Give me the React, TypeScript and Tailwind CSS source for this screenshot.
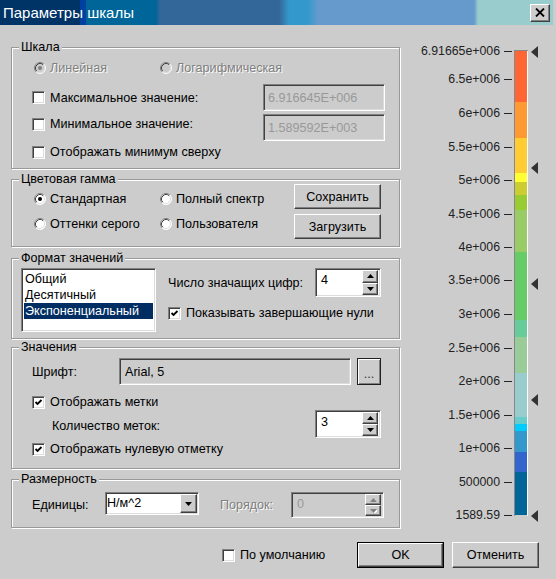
import React from "react";

const SUNKEN =
  "border border-t-[#808080] border-l-[#808080] border-b-white border-r-white shadow-[inset_1px_1px_0_#404040,inset_-1px_-1px_0_#dcdcdc]";
const RAISED =
  "border border-t-white border-l-white border-b-[#404040] border-r-[#404040] shadow-[inset_-1px_-1px_0_#808080] bg-[#cccccc]";
const DIS = "text-[#808080] [text-shadow:1px_1px_0_#ffffff]";

function Check({ checked }: { checked?: boolean }) {
  return (
    <span className={`flex items-center justify-center w-[13px] h-[13px] shrink-0 bg-white ${SUNKEN}`}>
      {checked && (
        <svg width="9" height="9" viewBox="0 0 9 9">
          <polyline points="1.5,4 3.5,6 7.5,2" fill="none" stroke="#000" strokeWidth="1.8" />
        </svg>
      )}
    </span>
  );
}

function Radio({ checked, disabled }: { checked?: boolean; disabled?: boolean }) {
  return (
    <svg width="12" height="12" viewBox="0 0 12 12" className="shrink-0">
      <circle cx="6" cy="6" r="5.5" fill={disabled ? "#cccccc" : "#ffffff"} />
      <path d="M2.11 9.89 A5.5 5.5 0 0 1 9.89 2.11" stroke="#808080" fill="none" />
      <path d="M9.89 2.11 A5.5 5.5 0 0 1 2.11 9.89" stroke="#ffffff" fill="none" />
      <path d="M2.82 9.18 A4.5 4.5 0 0 1 9.18 2.82" stroke="#404040" fill="none" />
      <path d="M9.18 2.82 A4.5 4.5 0 0 1 2.82 9.18" stroke="#dcdcdc" fill="none" />
      {checked && <circle cx="6" cy="6" r="2" fill={disabled ? "#808080" : "#000000"} />}
    </svg>
  );
}

function Group({ title, className, children }: { title: string; className: string; children: React.ReactNode }) {
  return (
    <fieldset className={`border border-[#999999] shadow-[inset_1px_1px_0_#ffffff,1px_1px_0_#ffffff] ${className}`}>
      <legend className="ml-[7px] px-[2px] leading-[14px] bg-[#cccccc]">{title}</legend>
      {children}
    </fieldset>
  );
}

function Btn({ label, className }: { label: string; className: string }) {
  return <div className={`flex items-center justify-center ${RAISED} ${className}`}>{label}</div>;
}

function Arrow({ up, disabled }: { up?: boolean; disabled?: boolean }) {
  return (
    <div className={`flex-1 flex items-center justify-center ${RAISED}`}>
      <svg width="7" height="4" viewBox="0 0 7 4">
        {disabled && <polygon points={up ? "1,5 8,5 4.5,1" : "1,1 8,1 4.5,5"} fill="#ffffff" />}
        <polygon points={up ? "0,4 7,4 3.5,0" : "0,0 7,0 3.5,4"} fill={disabled ? "#808080" : "#000000"} />
      </svg>
    </div>
  );
}

function Spin({ value, disabled, className }: { value: string; disabled?: boolean; className: string }) {
  return (
    <div className={`flex p-[1px] ${SUNKEN} ${disabled ? "bg-[#cccccc] text-[#999999]" : "bg-white"} ${className}`}>
      <span className="flex-1 pl-[4px] pt-[3px] leading-[14px]">{value}</span>
      <div className="flex flex-col w-[16px] mr-[1px]">
        <Arrow up disabled={disabled} />
        <Arrow disabled={disabled} />
      </div>
    </div>
  );
}

const TICKS: [string, number][] = [
  ["6.91665e+006", 51],
  ["6.5e+006", 79],
  ["6e+006", 113],
  ["5.5e+006", 147],
  ["5e+006", 180],
  ["4.5e+006", 214],
  ["4e+006", 247],
  ["3.5e+006", 280],
  ["3e+006", 314],
  ["2.5e+006", 348],
  ["2e+006", 381],
  ["1.5e+006", 415],
  ["1e+006", 448],
  ["500000", 482],
  ["1589.59", 515],
];

const BANDS: [string, number, number][] = [
  ["#ff6633", 51, 102],
  ["#ff9933", 102, 138],
  ["#ffcc33", 138, 173],
  ["#ffff33", 173, 182],
  ["#cccc33", 182, 195],
  ["#99cc33", 195, 210],
  ["#99cc66", 210, 252],
  ["#66cc66", 252, 320],
  ["#66cc99", 320, 337],
  ["#99cc99", 337, 373],
  ["#99cccc", 373, 417],
  ["#66cccc", 417, 424],
  ["#00ccff", 424, 431],
  ["#3399cc", 431, 452],
  ["#3366cc", 452, 472],
  ["#006699", 472, 515],
];

function Scale() {
  return (
    <svg width="155" height="517" viewBox="401 25 155 517" className="shrink-0">
      {BANDS.map(([c, a, b]) => (
        <rect key={c + a} x="515" y={a} width="12" height={b - a} fill={c} />
      ))}
      <line x1="514.5" y1="50" x2="514.5" y2="516" stroke="#888888" />
      <line x1="514" y1="50.5" x2="528" y2="50.5" stroke="#888888" />
      <line x1="527.5" y1="51" x2="527.5" y2="516" stroke="#ffffff" />
      {TICKS.map(([t, y]) => (
        <g key={t}>
          <line x1="504" y1={y + 0.5} x2="512" y2={y + 0.5} stroke="#222222" />
          <text
            x="500"
            y={y + 1}
            textAnchor="end"
            dominantBaseline="middle"
            fontFamily="'Liberation Sans', Arial, sans-serif"
            fontSize="12.3"
            fill="#222222"
          >
            {t}
          </text>
        </g>
      ))}
      {[52, 168, 284, 400, 516].map((y) => (
        <polygon key={y} points={`531,${y} 538,${y - 6} 538,${y + 6}`} fill="#333333" />
      ))}
    </svg>
  );
}

export default function App() {
  return (
    <div className="w-[556px] h-[579px] bg-[#cccccc] flex flex-col font-['Liberation_Sans',Arial,sans-serif] text-[12.6px] leading-[16px] text-black overflow-hidden">
      {/* Title bar */}
      <div className="w-[553px] h-[25px] shrink-0 flex items-center justify-between pl-[3px] pr-[3px] bg-[linear-gradient(90deg,#003366_0px,#003366_80px,#0040a0_80px,#0040a0_86px,#006699_86px,#006699_156px,#336699_160px,#336699_279px,#3399cc_289px,#3399cc_308px,#6699cc_318px,#6699cc_474px,#99cccc_478px)]">
        <span className="text-white text-[15px] leading-[18px]">Параметры шкалы</span>
        <div className={`w-[20px] h-[18px] flex items-center justify-center ${RAISED}`}>
          <svg width="10" height="9" viewBox="0 0 10 9">
            <path d="M1 0.5 L9 8.5 M9 0.5 L1 8.5" stroke="#000" strokeWidth="1.8" />
          </svg>
        </div>
      </div>

      {/* Body */}
      <div className="flex h-[517px] shrink-0">
        <div className="w-[401px] pl-[11px] pt-[15px] flex flex-col shrink-0">
          {/* Шкала */}
          <Group title="Шкала" className="h-[129px] w-[389px]">
            <div className="flex items-center ml-[22px] mt-[6px] h-[16px]">
              <div className="flex items-center gap-[4px] w-[126px]">
                <Radio checked disabled />
                <span className={DIS}>Линейная</span>
              </div>
              <div className="flex items-center gap-[4px]">
                <Radio disabled />
                <span className={DIS}>Логарифмическая</span>
              </div>
            </div>
            <div className="flex items-center justify-between ml-[20px] w-[353px] mt-[8px] h-[27px]">
              <div className="flex items-center gap-[5px]">
                <Check />
                <span>Максимальное значение:</span>
              </div>
              <div className={`w-[122px] h-[27px] flex items-center pl-[4px] text-[#999999] ${SUNKEN}`}>6.916645E+006</div>
            </div>
            <div className="flex items-start justify-between ml-[20px] w-[353px] mt-[3px] h-[27px]">
              <div className="flex items-center gap-[5px] mt-[2px]">
                <Check />
                <span>Минимальное значение:</span>
              </div>
              <div className={`w-[122px] h-[27px] flex items-center pl-[4px] text-[#999999] ${SUNKEN}`}>1.589592E+003</div>
            </div>
            <div className="flex items-center gap-[5px] ml-[20px] mt-[3px] h-[16px]">
              <Check />
              <span>Отображать минимум сверху</span>
            </div>
          </Group>

          {/* Цветовая гамма */}
          <Group title="Цветовая гамма" className="h-[75px] w-[389px] mt-[3px]">
            <div className="flex ml-[22px]">
              <div className="w-[260px] flex flex-col mt-[5px] gap-[9px]">
                <div className="flex items-center h-[16px]">
                  <div className="flex items-center gap-[4px] w-[126px]">
                    <Radio checked />
                    <span>Стандартная</span>
                  </div>
                  <div className="flex items-center gap-[4px]">
                    <Radio />
                    <span>Полный спектр</span>
                  </div>
                </div>
                <div className="flex items-center h-[16px]">
                  <div className="flex items-center gap-[4px] w-[126px]">
                    <Radio />
                    <span>Оттенки серого</span>
                  </div>
                  <div className="flex items-center gap-[4px]">
                    <Radio />
                    <span>Пользователя</span>
                  </div>
                </div>
              </div>
              <div className="flex flex-col gap-[5px] -mt-[2px]">
                <Btn label="Сохранить" className="w-[87px] h-[25px]" />
                <Btn label="Загрузить" className="w-[87px] h-[25px]" />
              </div>
            </div>
          </Group>

          {/* Формат значений */}
          <Group title="Формат значений" className="h-[88px] w-[389px] mt-[4px]">
            <div className="flex ml-[9px] mt-[3px]">
              <div className={`w-[135px] h-[64px] bg-white p-[2px] flex flex-col ${SUNKEN}`}>
                <div className="h-[16px] leading-[16px] px-[1px]">Общий</div>
                <div className="h-[16px] leading-[16px] px-[1px]">Десятичный</div>
                <div className="h-[16px] leading-[16px] px-[1px] bg-[#002e63] text-white">Экспоненциальный</div>
              </div>
              <div className="ml-[12px] flex flex-col">
                <div className="flex items-center">
                  <span className="w-[147px]">Число значащих цифр:</span>
                  <Spin value="4" className="w-[66px] h-[29px]" />
                </div>
                <div className="flex items-center gap-[5px] mt-[8px] h-[16px]">
                  <Check checked />
                  <span>Показывать завершающие нули</span>
                </div>
              </div>
            </div>
          </Group>

          {/* Значения */}
          <Group title="Значения" className="h-[129px] w-[389px] mt-[1px]">
            <div className="flex items-center ml-[20px] mt-[4px]">
              <span className="w-[87px]">Шрифт:</span>
              <div className={`w-[232px] h-[27px] flex items-center pl-[5px] ${SUNKEN}`}>Arial, 5</div>
              <div className="ml-[6px] w-[24px] h-[27px] border border-[#202020] flex items-end justify-center pb-[5px] shadow-[inset_1px_1px_0_#ffffff,inset_-1px_-1px_0_#808080] leading-[10px] text-[#333333]">
                ...
              </div>
            </div>
            <div className="flex items-center gap-[5px] ml-[20px] mt-[9px] h-[16px]">
              <Check checked />
              <span>Отображать метки</span>
            </div>
            <div className="flex items-center ml-[40px]">
              <span className="w-[263px] mt-[3px]">Количество меток:</span>
              <Spin value="3" className="w-[66px] h-[28px]" />
            </div>
            <div className="flex items-center gap-[5px] ml-[20px] mt-[3px] h-[16px]">
              <Check checked />
              <span>Отображать нулевую отметку</span>
            </div>
          </Group>

          {/* Размерность */}
          <Group title="Размерность" className="h-[56px] w-[389px] mt-[3px]">
            <div className="flex items-center ml-[20px] mt-[6px] h-[26px]">
              <span className="w-[73px]">Единицы:</span>
              <div className={`self-start flex w-[94px] h-[23px] bg-white p-[1px] ${SUNKEN}`}>
                <span className="flex-1 leading-[19px]">Н/м^2</span>
                <div className={`w-[17px] flex items-center justify-center ${RAISED}`}>
                  <svg width="7" height="4" viewBox="0 0 7 4">
                    <polygon points="0,0 7,0 3.5,4" fill="#000" />
                  </svg>
                </div>
              </div>
              <span className={`ml-[21px] w-[71px] ${DIS}`}>Порядок:</span>
              <Spin value="0" disabled className="w-[93px] h-[26px]" />
            </div>
          </Group>
        </div>
        <Scale />
      </div>

      {/* Bottom row */}
      <div className="flex items-center h-[26px] pl-[222px] shrink-0">
        <div className="flex items-center gap-[5px] w-[135px]">
          <Check />
          <span>По умолчанию</span>
        </div>
        <div className="border border-black">
          <Btn label="OK" className="w-[85px] h-[24px]" />
        </div>
        <Btn label="Отменить" className="ml-[8px] w-[87px] h-[26px]" />
      </div>
    </div>
  );
}
